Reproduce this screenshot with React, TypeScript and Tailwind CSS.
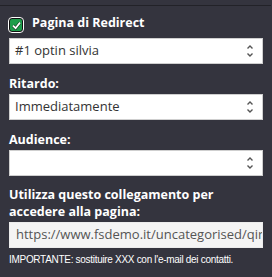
import type { ReactNode } from "react";

function Arrows() {
  return (
    <svg width="8" height="14" viewBox="0 0 8 14" className="shrink-0">
      <path d="M1.5 4.5 L4 2 L6.5 4.5" fill="none" stroke="#555" strokeWidth="1.4" />
      <path d="M1.5 9.5 L4 12 L6.5 9.5" fill="none" stroke="#555" strokeWidth="1.4" />
    </svg>
  );
}

function SelectBox({ value }: { value?: string }) {
  return (
    <div className="flex h-[26px] items-center justify-between border border-[#cfcfcf] bg-white pl-[5px] pr-[8px] text-[13px] text-[#333]">
      <span>{value}</span>
      <Arrows />
    </div>
  );
}

function Label({ children }: { children: ReactNode }) {
  return <div className="text-[12.5px] font-bold leading-[17px] text-white">{children}</div>;
}

export default function App() {
  return (
    <div
      className="h-[277px] w-[272px] overflow-hidden bg-[#34343e] pt-[5px]"
      style={{ fontFamily: '"Open Sans", sans-serif' }}
    >
      <div className="h-[1px] w-[271px] bg-[#222228]" />
      <div className="px-[9px] pt-[8px]">
        <div className="flex items-start gap-[8px]">
          <div className="ml-[-1px] mt-[3px] flex h-[16px] w-[16px] items-center justify-center rounded-[4px] border-[1.5px] border-white bg-[#111]">
            <div className="flex h-[12px] w-[12px] items-center justify-center rounded-[2px] bg-[#1d9d4b]">
              <svg width="11" height="11" viewBox="0 0 11 11">
                <path d="M2 5.6 L4.6 8.2 L9 2.6" fill="none" stroke="#0b3d1c" strokeWidth="3" />
                <path d="M2 5.6 L4.6 8.2 L9 2.6" fill="none" stroke="#fff" strokeWidth="1.8" />
              </svg>
            </div>
          </div>
          <Label>Pagina di Redirect</Label>
        </div>
        <div className="mt-[5px]">
          <SelectBox value="#1 optin silvia" />
        </div>

        <div className="mt-[11px]">
          <Label>Ritardo:</Label>
        </div>
        <div className="mt-[2px]">
          <SelectBox value="Immediatamente" />
        </div>

        <div className="mt-[11px]">
          <Label>Audience:</Label>
        </div>
        <div className="mt-[2px]">
          <SelectBox />
        </div>

        <div className="mt-[10px]">
          <Label>
            Utilizza questo collegamento per
            <br />
            accedere alla pagina:
          </Label>
        </div>
        <div className="mt-[2px] flex h-[26px] items-center overflow-hidden whitespace-nowrap border border-[#ececec] bg-[#f4f4f4] pl-[6px] text-[13px] text-[#555]">
          https://www.fsdemo.it/uncategorised/qir
        </div>
        <div
          className="mt-[5px] whitespace-nowrap text-[10px] leading-[14px] tracking-[-0.3px] text-white"
          style={{ fontFamily: '"Liberation Sans", Arial, sans-serif' }}
        >
          IMPORTANTE: sostituire XXX con l'e-mail dei contatti.
        </div>
      </div>
    </div>
  );
}
